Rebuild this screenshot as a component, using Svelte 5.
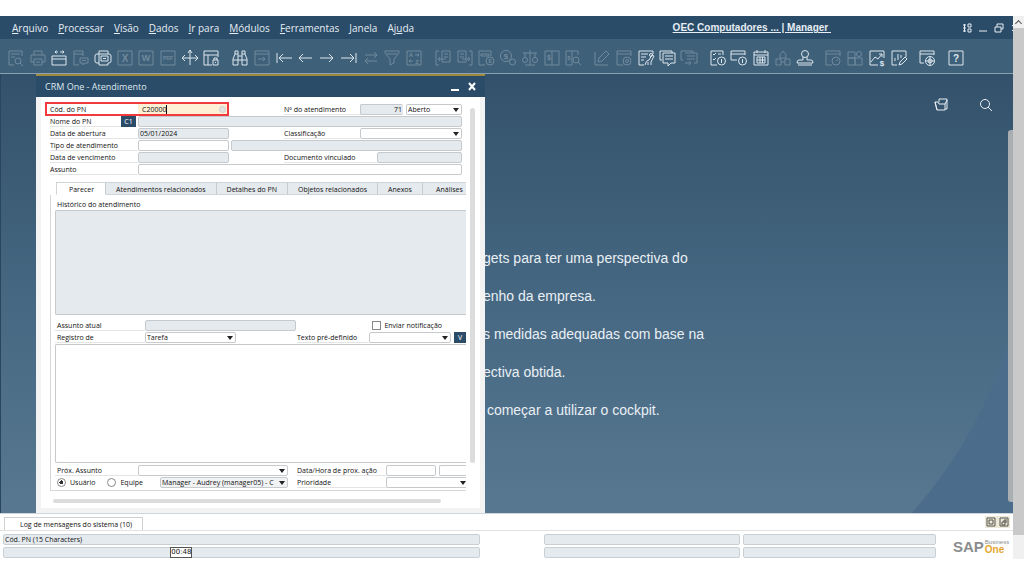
<script lang="ts">
  interface Icon {
    name: string;
    d: string;
    dim?: boolean;
    glyphs?: Array<{ x: number; y: number; size: number; text: string }>;
  }

  const circle = (x: number, y: number, r: number) =>
    `M${x - r} ${y}a${r} ${r} 0 1 0 ${2 * r} 0a${r} ${r} 0 1 0 ${-2 * r} 0`;

  const menus = [
    { key: 'A', rest: 'rquivo' },
    { key: 'P', rest: 'rocessar' },
    { key: 'V', rest: 'isão' },
    { key: 'D', rest: 'ados' },
    { key: 'I', rest: 'r para' },
    { key: 'M', rest: 'ódulos' },
    { key: 'F', rest: 'erramentas' },
    { key: 'J', rest: 'anela' },
    { pre: 'Aj', key: 'u', rest: 'da' }
  ];

  const groups: Icon[][] = [
    [
      { name: 'Visualizar', dim: true, d: 'M7 16H2V2h13v5M4 5h9M4 8h4' + circle(11, 12, 3) + 'M13 14l3 3' },
      { name: 'Imprimir', dim: true, d: 'M5 6V2h8v4M5 13H2V6h14v7h-3M5 10h8v6H5zM7 13h4' },
      { name: 'Enviar', d: 'M2 16V7h14v9zM2 10h14M5 3h3M5 3l1.500-1.500M5 3l1.500 1.500M10 3h4M14 3l-1.500-1.500M14 3l-1.500 1.500' },
      { name: 'SMS', dim: true, d: 'M7 16H2V2h9v5M2 5h9M8 9h8v5h-3l-2 2v-2H8zM10 11.500h4' },
      { name: 'Fax', d: 'M5 5V2h9v3M3 5h12q2 0 2 2v5q0 2-2 2h-1v2H5v-2H3q-2 0-2-2V7q0-2 2-2zM5 5v9M7 7h7v5H7zM9 9.500h3' },
      { name: 'Excel', dim: true, d: 'M2 2h14v14H2z', glyphs: [{ x: 9, y: 13, size: 10, text: 'X' }] },
      { name: 'Word', dim: true, d: 'M2 2h14v14H2z', glyphs: [{ x: 9, y: 12, size: 9, text: 'W' }] },
      { name: 'PDF', dim: true, d: 'M2 2h14v14H2z', glyphs: [{ x: 9, y: 11, size: 5, text: 'PDF' }] },
      { name: 'Mover', d: 'M9 1v15M1 9h16M7 4l2-3 2 3M4 6L1 9l3 3M14 6l3 3-3 3' },
      { name: 'Bloquear', d: 'M10 16H2V2h14v6M2 6h14M6 6v10M11 11h5v5h-5zM12 11V9h3v2M13.500 13v1' }
    ],
    [
      { name: 'Procurar', d: 'M4 5V2h3v3M11 5V2h3v3M4 5L2 10v6h5V5zM11 5v11h5v-6l-2-5zM7 7h4M7 11h4M2 11h5M11 11h5' },
      { name: 'Adicionar', dim: true, d: 'M2 2h14v14H2zM2 5h14M5 10h7M10 8l2 2-2 2' },
      { name: 'Primeiro', d: 'M2 4v10M4 9h13M8 5L4 9l4 4' },
      { name: 'Anterior', d: 'M3 9h13M7 5L3 9l4 4' },
      { name: 'Próximo', d: 'M2 9h13M11 5l4 4-4 4' },
      { name: 'Último', d: 'M16 4v10M1 9h13M10 5l4 4-4 4' },
      { name: 'Atualizar', dim: true, d: 'M3 6h12M12 3l3 3-3 3M15 12H3M6 9l-3 3 3 3' },
      { name: 'Filtrar', dim: true, d: 'M2 2h14v2l-5 6v4l-4 2v-6L2 4zM4 5h10' },
      { name: 'Ordenar', dim: true, d: 'M2 2h14v14H2zM10 6h4M12.500 4.500L14 6l-1.500 1.500M4 12h4M5.500 10.500L4 12l1.500 1.500', glyphs: [{ x: 6, y: 8, size: 6, text: 'A' }, { x: 12, y: 15, size: 6, text: 'Z' }] }
    ],
    [
      { name: 'Documento base', dim: true, d: 'M5 2H2v14h3M8 2h8v11H8zM10 5h4M10 8h4M12 10H4M6 8l-2 2 2 2' },
      { name: 'Documento destino', dim: true, d: 'M13 2h3v14h-3M2 2h8v11H2zM4 5h4M4 8h4M6 10h8M12 8l2 2-2 2' },
      { name: 'Lucro bruto', dim: true, d: 'M8 16H2V2h12v5M4 5h8v2H4z' + circle(13, 12, 4), glyphs: [{ x: 13, y: 14, size: 6, text: '$' }] },
      { name: 'Pagamento', dim: true, d: circle(7, 7, 5.5) + circle(13.5, 13, 3), glyphs: [{ x: 7, y: 10, size: 8, text: '$' }] },
      { name: 'Volume', dim: true, d: 'M9 1v15M2 4h14M4 4v4M14 4v4M4 16h10' + circle(4, 11, 2.5) + circle(14, 11, 2.5) },
      { name: 'Diário', dim: true, d: 'M2 2h14v14H2zM9 2v14', glyphs: [{ x: 6, y: 11, size: 7, text: '$' }] },
      { name: 'Pesquisa de diário', dim: true, d: 'M8 16H2V2h12v4M8 2v14' + circle(12, 11, 3) + 'M14 13l3 3', glyphs: [{ x: 5, y: 11, size: 6, text: '$' }] }
    ],
    [
      { name: 'Editar', dim: true, d: 'M2 3v13h13M5 13l1-4 7-7 3 3-7 7z' },
      { name: 'Configurações', dim: true, d: 'M8 16H2V2h14v5M2 5h14' + circle(12, 12, 4) + circle(12, 12, 1.5) },
      { name: 'Designer', d: 'M7 16H2V2h14v3M4 5h7M4 8h5M4 11h3M8 16q1-5 4-5l3-5 2 1-3 6v3M11 16v-3' + circle(14, 6, 1.5) },
      { name: 'Mensagens', d: 'M4 11H2V2h12v2M5 4h12v10h-4l-3 3v-3H5zM7 7h8M7 10h8' },
      { name: 'Transferir mensagem', dim: true, d: 'M3 11H1V2h12v2M5 4h12v10h-3M7 7h8M7 10h8M5 14h6M9 12l2 2-2 2' }
    ],
    [
      { name: 'Atividades', d: 'M8 16H2V2h12v4M4 5l1 1 2-2M9 5h3M4 10l1 1 2-2' + circle(12.5, 12, 4) + 'M12.500 10v4' },
      { name: 'Alertas', d: 'M7 11H1V2h14v4M1 5h14' + circle(12.5, 12, 4) + 'M12.500 10v4' },
      { name: 'Calendário', d: 'M2 3h14v13H2zM2 6h14M5 1v3M13 1v3M5 8h8v6H5zM5 11h8M8 8v6M10.500 8v6' },
      { name: 'Estrutura', dim: true, d: 'M6 6l3-4 3 4v3H6zM2 10h5v6H2zM11 10h5v6h-5zM7 13h4' },
      { name: 'Usuários', d: circle(9, 5, 3.5) + 'M7 8v3H3q-2 0-2 3h16q0-3-2-3h-4V8M2 16h14' }
    ],
    [
      { name: 'Painel', dim: true, d: 'M8 16H2V2h14v5M2 5h14' + circle(12, 12, 4) + 'M12 12l2-2' },
      { name: 'Widgets', dim: true, d: 'M2 3h7v6H2zM2 9h7v7H2zM9 9h7v7H9z' + circle(13, 5, 2.5) },
      { name: 'Vendas', d: 'M10 16H2V2h14v7M3 13l4-5 3 2 4-5M11 5h3v3', glyphs: [{ x: 14, y: 17, size: 8, text: '$' }] },
      { name: 'Relatórios', d: 'M7 16H2V2h14v6M5 12V9M8 11V5M11 9V6M9 16l1-3 5-5 2 2-5 5z' }
    ],
    [{ name: 'Browser', d: 'M6 14H2V2h14v4M2 5h14' + circle(12, 12, 4.5) + circle(12, 12, 2) + 'M7.500 12h9M12 7.500v9' }],
    [{ name: 'Ajuda', d: 'M2 2h14v14H2z', glyphs: [{ x: 9, y: 13, size: 10, text: '?' }] }]
  ];

  const tabs = ['Parecer', 'Atendimentos relacionados', 'Detalhes do PN', 'Objetos relacionados', 'Anexos', 'Análises'];

  const welcome = [
    'gets para ter uma perspectiva do',
    'enho da empresa.',
    's medidas adequadas com base na',
    'ectiva obtida.',
    ' começar a utilizar o cockpit.'
  ];

  let activeTab = 'Parecer';
  let code = 'C20000';
  let assignTo = 'user';
</script>

<div class="screen">
  <div class="client">
    <header class="menubar">
      <nav>
        {#each menus as menu}
          <button class="menu">{menu.pre || ''}<u>{menu.key}</u>{menu.rest}</button>
        {/each}
      </nav>
      <a class="company" href="#company">OEC Computadores ... | Manager&nbsp;</a>
      <div class="app-controls">
        <button aria-label="Layout">
          <svg viewBox="0 0 10 10"><path d="M1 2h3M1 5h3M1 8h3M2.500 1v8M6 1h3v3H6zM6 6h3v3H6z" /></svg>
        </button>
        <button aria-label="Minimizar"><svg viewBox="0 0 10 10"><path d="M1 8h8" /></svg></button>
        <button aria-label="Restaurar">
          <svg viewBox="0 0 10 10"><path d="M1 4h6v5H1zM3 4V1h6v5H7" /></svg>
        </button>
        <button aria-label="Fechar"><svg viewBox="0 0 10 10"><path d="M2 2l6 6M8 2L2 8" /></svg></button>
      </div>
    </header>

    <div class="toolbar">
      {#each groups as group}
        <div class="tool-group" style="flex-grow: {group.length}">
          {#each group as icon}
            <button class="tool" class:dim={icon.dim} aria-label={icon.name}>
              <svg viewBox="0 0 18 18">
                <path d={icon.d} />
                {#each icon.glyphs || [] as g}
                  <text x={g.x} y={g.y} font-size={g.size}>{g.text}</text>
                {/each}
              </svg>
            </button>
          {/each}
        </div>
      {/each}
    </div>

    <main class="desktop">
      <svg class="backdrop" viewBox="0 0 100 100" preserveAspectRatio="none">
        <path d="M90 100Q97 82 100 58V100z" />
      </svg>

      <section class="window">
        <div class="titlebar">
          <h1>CRM One - Atendimento</h1>
          <button aria-label="Minimizar janela"><svg viewBox="0 0 10 10"><path d="M1 8h8" /></svg></button>
          <button aria-label="Fechar janela"><svg viewBox="0 0 10 10"><path d="M2 1l6 7M8 1L2 8" /></svg></button>
        </div>

        <div class="window-body">
          <div class="scroll-area">
            <form class="form">
              <div class="row highlighted">
                <label class="name" for="code">Cód. do PN</label>
                <div class="code-field">
                  <input id="code" bind:value={code} />
                  <span class="caret"></span>
                  <span class="picker"></span>
                </div>
                <div class="side">
                  <label for="number">Nº do atendimento</label>
                  <input id="number" class="number" value="71" readonly />
                  <select aria-label="Status"><option>Aberto</option></select>
                </div>
              </div>
              <div class="row">
                <label class="name short" for="bp">Nome do PN</label>
                <button type="button" class="mini">C1</button>
                <input id="bp" class="grow" readonly />
              </div>
              <div class="row">
                <label class="name" for="opened">Data de abertura</label>
                <input id="opened" class="std" value="05/01/2024" readonly />
                <div class="side">
                  <label for="class">Classificação</label>
                  <select id="class"><option></option></select>
                </div>
              </div>
              <div class="row">
                <label class="name" for="type">Tipo de atendimento</label>
                <input id="type" class="std" />
                <input class="grow spaced" aria-label="Descrição do tipo" readonly />
              </div>
              <div class="row">
                <label class="name" for="due">Data de vencimento</label>
                <input id="due" class="std" readonly />
                <div class="side">
                  <label class="wide" for="doc">Documento vinculado</label>
                  <input id="doc" class="grow" readonly />
                </div>
              </div>
              <div class="row">
                <label class="name" for="subject">Assunto</label>
                <input id="subject" class="grow" />
              </div>
            </form>

            <div class="tabs" role="tablist">
              {#each tabs as tab}
                <button
                  role="tab"
                  aria-selected={tab === activeTab}
                  class:active={tab === activeTab}
                  on:click={() => (activeTab = tab)}
                >{tab}</button>
              {/each}
            </div>

            <div class="panel">
              <label class="history-label" for="history">Histórico do atendimento</label>
              <textarea id="history" class="history" readonly></textarea>
              <div class="row">
                <label class="name" for="current">Assunto atual</label>
                <input id="current" class="current" readonly />
                <label class="check"><input type="checkbox" />Enviar notificação</label>
              </div>
              <div class="row">
                <label class="name" for="record">Registro de</label>
                <select id="record" class="std"><option>Tarefa</option></select>
                <label class="second far" for="template">Texto pré-definido</label>
                <select id="template" class="grow"><option></option></select>
                <button type="button" class="mini v">V</button>
              </div>
              <textarea class="notes" aria-label="Parecer"></textarea>
              <div class="row">
                <label class="name next" for="next">Próx. Assunto</label>
                <select id="next" class="next-field"><option></option></select>
                <label class="second" for="date">Data/Hora de prox. ação</label>
                <input id="date" class="date" />
                <input class="grow cut" aria-label="Hora" />
              </div>
              <div class="row">
                <div class="assign">
                  <label><input type="radio" bind:group={assignTo} value="user" />Usuário</label>
                  <label><input type="radio" bind:group={assignTo} value="team" />Equipe</label>
                </div>
                <select class="owner" aria-label="Responsável"><option>Manager - Audrey (manager05) - C</option></select>
                <label class="second" for="priority">Prioridade</label>
                <select id="priority" class="grow cut"><option></option></select>
              </div>
            </div>
          </div>
          <div class="v-scroll"></div>
          <div class="h-scroll"></div>
        </div>
      </section>

      <div class="cockpit">
        <div class="cockpit-tools">
          <button aria-label="Abrir">
            <svg viewBox="0 0 14 14"><path d="M5 4V1h8v10h-2M1 4h3l1 2h6v6H3zM1 4l2 8M11 6l2-4" /></svg>
          </button>
          <button aria-label="Pesquisar">
            <svg viewBox="0 0 14 14"><path d={circle(6, 6, 4.5) + 'M9 9l4 4'} /></svg>
          </button>
        </div>
        <div class="welcome">
          {#each welcome as line}
            <p>{line}</p>
          {/each}
        </div>
      </div>
      <div class="desktop-scroll"></div>
    </main>

    <div class="logbar">
      <button class="log-tab">Log de mensagens do sistema (10)</button>
      <div class="log-controls">
        <button aria-label="Maximizar log"><svg viewBox="0 0 10 10"><path d="M1 1h8v8H1zM3 3h4v4H3z" /></svg></button>
        <button aria-label="Restaurar log"><svg viewBox="0 0 10 10"><path d="M1 1h8v8H1zM3 5h3v3H3zM4 4h3v2M5 3h3" /></svg></button>
      </div>
    </div>

    <footer class="status">
      <div class="fields">
        <div class="cell main">Cód. PN (15 Characters)</div>
        <div class="cell"></div>
        <div class="cell"></div>
        <div class="cell main"><span class="time-tip">00:48</span></div>
        <div class="cell"></div>
        <div class="cell"></div>
      </div>
      <div class="logo">
        <strong>SAP</strong>
        <span>Business<b>One</b></span>
      </div>
    </footer>
  </div>

  <div class="page-scroll">
    <span class="up"></span>
    <span class="thumb"></span>
    <span class="down"></span>
  </div>
</div>

<style>
  :global(body) {
    background: #fff;
  }

  .screen {
    display: flex;
    min-height: 100vh;
    box-sizing: border-box;
    padding: 16px 0 17px;
    overflow: hidden;
    font-family: 'Open Sans', sans-serif;
    font-size: 7px;
    color: #111;
  }

  .screen *,
  .screen *::after {
    box-sizing: border-box;
  }

  button,
  input,
  select,
  textarea {
    margin: 0;
    padding: 0;
    border: 0;
    border-radius: 0;
    background: none;
    font: inherit;
    color: inherit;
  }

  svg {
    display: block;
    fill: none;
    stroke: currentColor;
  }

  .client {
    display: flex;
    flex-direction: column;
    flex: 1;
    min-width: 0;
  }

  /* Menu */
  .menubar {
    display: flex;
    align-items: center;
    height: 23px;
    background: #2a4c69;
    color: #e6edf3;
    font-size: 10px;
  }

  .menubar nav {
    display: flex;
    gap: 10px;
    flex: 1;
    padding-left: 12px;
    white-space: nowrap;
  }

  .company {
    margin-right: 131px;
    font: bold 10px 'Liberation Sans', sans-serif;
    color: #e6edf3;
    white-space: nowrap;
    text-decoration: underline;
  }

  .app-controls {
    display: flex;
    gap: 6px;
    width: 51px;
    overflow: hidden;
  }

  .app-controls button {
    flex: none;
  }

  .app-controls svg {
    width: 10px;
    height: 10px;
  }

  /* Toolbar */
  .toolbar {
    display: flex;
    gap: 7px;
    height: 35px;
    padding: 4px 46px 0 5px;
    background: #3f6079;
    border-bottom: 1px solid #8ba0b1;
  }

  .tool-group {
    display: flex;
    flex-basis: 0;
  }

  .tool {
    display: flex;
    flex: 1;
    align-items: center;
    justify-content: center;
    color: #dce6ed;
  }

  .tool.dim {
    color: #6f8a9e;
  }

  .tool svg {
    flex: none;
    width: 18px;
    height: 18px;
  }

  .tool text {
    fill: currentColor;
    stroke: none;
    text-anchor: middle;
    font-family: 'Liberation Sans', sans-serif;
    font-weight: bold;
  }

  /* Desktop */
  .desktop {
    position: relative;
    display: flex;
    flex: 1;
    align-items: flex-start;
    background: linear-gradient(#33516a, #456781 50%, #587891);
    border-left: 1px solid #29465f;
  }

  .backdrop {
    position: absolute;
    width: 100%;
    height: 100%;
    fill: #4b6d8b;
    stroke: none;
  }

  .window {
    position: relative;
    z-index: 1;
    flex: none;
    width: 449px;
    margin-left: 35px;
    border-top: 2px solid #a08a3c;
    background: #fff;
  }

  .titlebar {
    display: flex;
    align-items: center;
    gap: 7px;
    height: 21px;
    padding: 0 8px 0 9px;
    background: #2a4c69;
    color: #fff;
  }

  h1 {
    flex: 1;
    margin: 0;
    font-size: 9px;
    font-weight: 400;
    color: #dfe8ee;
  }

  .titlebar svg {
    width: 10px;
    height: 10px;
    stroke-width: 2;
  }

  .window-body {
    display: grid;
    grid-template-columns: 1fr 5px;
    gap: 8px 4px;
    padding: 7px 5px 5px 9px;
    border: solid #f3f3f3;
    border-width: 0 5px 5px;
  }

  .scroll-area {
    min-width: 0;
  }

  .v-scroll {
    margin: 4px 0 28px;
    border-radius: 3px;
    background: #dcdcdc;
  }

  .h-scroll {
    height: 4px;
    margin: 0 25px 0 3px;
    border-radius: 2px;
    background: #dcdcdc;
  }

  /* Fields */
  .form {
    padding-right: 4px;
  }

  .row {
    position: relative;
    display: flex;
    height: 11px;
    margin-bottom: 1px;
    line-height: 12px;
    white-space: nowrap;
  }

  input,
  select,
  textarea {
    min-width: 0;
    border: 1px solid #c6cacd;
    border-radius: 2px;
    background-color: #fff;
    line-height: 9px;
    padding: 0 1px;
    outline: none;
  }

  input:read-only,
  textarea:read-only {
    background-color: #e5eaee;
  }

  input[type='checkbox'],
  input[type='radio'] {
    background-color: #fff;
  }

  select {
    appearance: none;
    background: #fff url("data:image/svg+xml,%3Csvg xmlns='http://www.w3.org/2000/svg' viewBox='0 0 6 4'%3E%3Cpath d='M0 0h6L3 4z' fill='%23222'/%3E%3C/svg%3E") no-repeat right 2px center / 6px 4px;
  }

  .name {
    width: 88px;
    border-bottom: 1px solid #e4e4e4;
  }

  .short {
    width: 71px;
  }

  .std {
    width: 91px;
  }

  .grow {
    flex: 1;
    width: 0;
  }

  .spaced {
    margin-left: 2px;
  }

  .highlighted::after {
    content: '';
    position: absolute;
    top: -2px;
    left: -5px;
    width: 184px;
    height: 14px;
    border: 2px solid #f03a3e;
    pointer-events: none;
  }

  .code-field {
    display: flex;
    align-items: center;
    width: 91px;
    padding-right: 3px;
    background: #fdf0d5;
  }

  .code-field input {
    flex: none;
    width: 28px;
    padding: 0 0 0 4px;
    border: 0;
    background: none;
  }

  .caret {
    width: 1px;
    height: 9px;
    background: #111;
  }

  .picker {
    width: 7px;
    height: 7px;
    margin-left: auto;
    border: 1px solid #cdcfd0;
    border-radius: 50%;
    background: #e3e3e0;
  }

  .side {
    display: flex;
    width: 178px;
    margin-left: auto;
  }

  .side label {
    width: 76px;
    border-bottom: 1px solid #e4e4e4;
  }

  .side .wide {
    width: 93px;
  }

  .side select {
    flex: 1;
  }

  .side .number {
    width: 43px;
    margin-right: 3px;
    border-right: 0;
    text-align: right;
  }

  .mini {
    width: 15px;
    margin-right: 2px;
    background: #2a4c69;
    color: #fff;
    line-height: 11px;
  }

  /* Tabs */
  .tabs {
    display: flex;
    height: 13px;
    margin-top: 7px;
    padding-left: 6px;
    overflow: hidden;
    white-space: nowrap;
  }

  .tabs button {
    flex: none;
    padding: 1px 10px 0;
    border-top: 1px solid #cfd4d7;
    border-right: 1px solid #c6cbce;
    border-bottom: 1px solid #d0d4d7;
    background: #e5eaee;
  }

  .tabs button:last-child {
    flex: 1;
    padding-right: 0;
    border-right: 0;
  }

  .tabs .active {
    padding: 1px 11px 0 12px;
    border-bottom-color: #fff;
    border-left: 1px solid #d0d4d7;
    background: #fff;
  }

  .panel {
    padding: 5px 0 1px 4px;
    border-left: 1px solid #d6d6d6;
    border-bottom: 1px solid #d6d6d6;
  }

  .panel .name {
    width: 90px;
    padding-left: 2px;
  }

  .panel .next {
    width: 83px;
  }

  .history-label {
    display: block;
    height: 10px;
    padding-left: 2px;
    line-height: 10px;
  }

  textarea {
    display: block;
    width: 100%;
    border-right: 0;
    border-radius: 2px 0 0 2px;
    resize: none;
  }

  .history {
    height: 105px;
    margin-bottom: 5px;
  }

  .notes {
    height: 119px;
    margin: 1px 0 2px;
  }

  .current {
    width: 151px;
  }

  .check {
    display: flex;
    align-items: center;
    gap: 3px;
    margin-left: auto;
    margin-right: 24px;
  }

  .check input {
    appearance: none;
    width: 9px;
    height: 9px;
    border: 1px solid #888;
    border-radius: 0;
  }

  .second {
    width: 89px;
    margin-left: 9px;
    border-bottom: 1px solid #e4e4e4;
  }

  .far {
    width: 72px;
    margin-left: 61px;
  }

  .v {
    width: 12px;
    margin: 0 0 0 3px;
  }

  .next-field {
    width: 150px;
  }

  .date {
    width: 50px;
    margin-right: 3px;
  }

  .cut {
    border-right: 0;
    border-radius: 2px 0 0 2px;
    background-position: right 0 center;
  }

  .assign {
    display: flex;
    gap: 12px;
    width: 105px;
    padding-left: 2px;
  }

  .assign label {
    display: flex;
    align-items: center;
    gap: 4px;
  }

  .assign input {
    appearance: none;
    width: 9px;
    height: 9px;
    border: 1px solid #888;
    border-radius: 50%;
  }

  .assign input:checked {
    background: radial-gradient(#333 0 2px, #fff 2px);
  }

  .owner {
    width: 128px;
    padding-right: 8px;
    background-color: #f1f2f3;
  }

  /* Cockpit */
  .cockpit {
    position: relative;
    flex: 1;
    color: #e9eff4;
  }

  .cockpit-tools {
    display: flex;
    justify-content: flex-end;
    gap: 31px;
    padding: 24px 15px 0 0;
  }

  .cockpit-tools svg {
    width: 14px;
    height: 14px;
  }

  .welcome {
    margin-top: 127px;
    font: 14px/38px 'Liberation Sans', sans-serif;
    white-space: pre;
  }

  .welcome p {
    margin: 0 0 0 -2px;
  }

  .desktop-scroll {
    position: relative;
    align-self: stretch;
    width: 5px;
    margin: 56px 0 11px;
    border-radius: 3px 0 0 3px;
    background: #a9aeb2;
  }

  /* Log and status */
  .logbar {
    display: flex;
    align-items: flex-end;
    justify-content: space-between;
    height: 18px;
    padding: 0 3px 0 4px;
    border-top: 1px solid #cfd6db;
    border-bottom: 1px solid #e2e2e2;
  }

  .log-tab {
    height: 13px;
    padding: 0 10px 0 15px;
    border: 1px solid #d0d0d0;
    border-bottom: 0;
  }

  .log-controls {
    display: flex;
    align-self: center;
    gap: 3px;
    padding: 1px;
    background: #ece9d8;
    color: #55554f;
  }

  .log-controls svg {
    width: 10px;
    height: 10px;
  }

  .status {
    display: flex;
    gap: 17px;
    padding: 3px 3px 1px;
  }

  .fields {
    display: grid;
    grid-template-columns: 538fr 196fr 193fr;
    gap: 2px 3px;
    flex: 1;
  }

  .cell {
    height: 11px;
    padding: 0 1px;
    border: 1px solid #c9d0d4;
    border-radius: 2px;
    background: #e5eaee;
    line-height: 10px;
  }

  .cell.main {
    position: relative;
    margin-right: 61px;
  }

  .time-tip {
    position: absolute;
    top: -1px;
    left: 35%;
    border: 1px solid #555;
    background: #fff;
    font: 7px/9px 'DejaVu Sans', sans-serif;
  }

  .logo {
    display: flex;
    align-items: center;
    gap: 1px;
    width: 57px;
    color: #8a8c8e;
    font-family: 'Liberation Sans', sans-serif;
  }

  .logo strong {
    font-size: 15px;
    line-height: 15px;
  }

  .logo span {
    font-size: 6px;
    line-height: 6px;
  }

  .logo b {
    display: block;
    color: #e3a62d;
    font-size: 10px;
    line-height: 9px;
  }

  /* Page scrollbar */
  .page-scroll {
    display: flex;
    flex-direction: column;
    flex: none;
    width: 11px;
    background: #f0f0f0;
  }

  .up {
    height: 12px;
    padding: 5px 3px;
  }

  .up::before {
    content: '';
    display: block;
    width: 4px;
    height: 4px;
    border: solid #555;
    border-width: 1px 0 0 1px;
    transform: rotate(45deg);
  }

  .thumb {
    flex: 1;
    background: #c9c9c9;
  }

  .down {
    height: 24px;
  }
</style>
